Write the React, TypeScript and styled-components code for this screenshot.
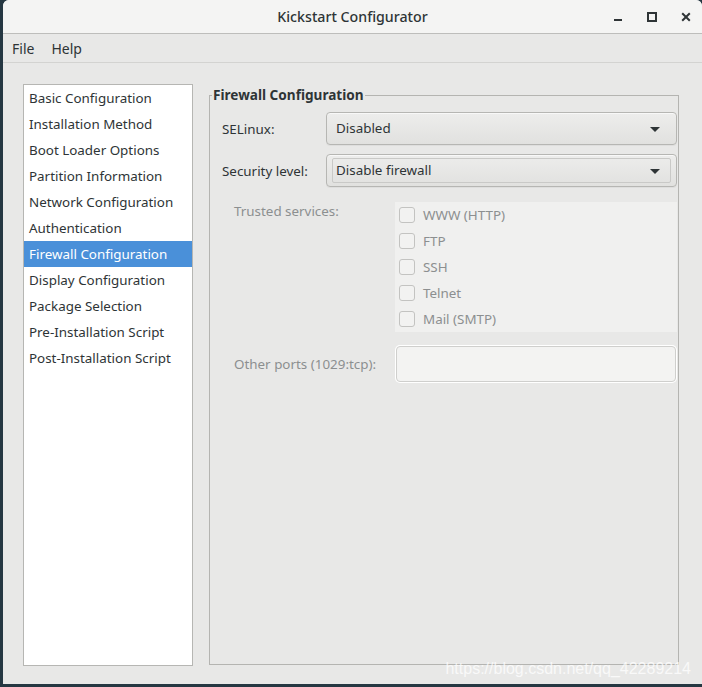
import React from "react";
import styled, { createGlobalStyle } from "styled-components";

const Global = createGlobalStyle`
  html, body { margin: 0; padding: 0; }
  body { background: #243541; font-family: "Noto Sans", "DejaVu Sans", sans-serif; }
  * { box-sizing: border-box; }
`;

const Desktop = styled.div`
  width: 702px;
  height: 687px;
  background: #253742;
  padding: 0 0 3px 3px;
  position: relative;
  overflow: hidden;
`;

const Window = styled.div`
  width: 699px;
  height: 684px;
  background: #e8e8e7;
  border-top-left-radius: 6px;
  border-top-right-radius: 6px;
  display: flex;
  flex-direction: column;
  overflow: hidden;
  color: #2e3436;
  font-size: 13.4px;
`;

const TitleBar = styled.div`
  height: 34px;
  flex: none;
  background: #f4f4f3;
  border-bottom: 1px solid #bdbdbb;
  display: flex;
  align-items: center;
  position: relative;
`;

const Title = styled.div`
  position: absolute;
  left: 0;
  right: 0;
  text-align: center;
  font-size: 14.2px;
  font-weight: 500;
  color: #2e3436;
  top: 7px;
`;

const Controls = styled.div`
  margin-left: auto;
  display: flex;
  align-items: center;
  margin-right: -1px;
  position: relative;
`;

const CtrlBtn = styled.div`
  width: 34px;
  height: 34px;
  display: flex;
  align-items: center;
  justify-content: center;
`;

const MenuBar = styled.div`
  height: 29px;
  flex: none;
  display: flex;
  align-items: center;
  padding-left: 8px;
  border-bottom: 1px solid #d3d3d1;
`;

const MenuItem = styled.div`
  padding: 0 6px 0 1px;
  margin-right: 10px;
  font-size: 14px;
`;

const Body = styled.div`
  flex: 1;
  display: flex;
  padding: 21px 23px 18px 20px;
  gap: 16px;
`;

const List = styled.div`
  width: 170px;
  background: #ffffff;
  border: 1px solid #b6b6b3;
  display: flex;
  flex-direction: column;
`;

const ListItem = styled.div<{ $selected?: boolean }>`
  height: 26px;
  line-height: 26px;
  padding-left: 5px;
  font-size: 13.4px;
  white-space: nowrap;
  background: ${(p) => (p.$selected ? "#4a90d9" : "transparent")};
  color: ${(p) => (p.$selected ? "#ffffff" : "#2e3436")};
`;

const Frame = styled.fieldset`
  flex: 1;
  margin: 2px 0 1px 0;
  padding: 0;
  border: 1px solid #b4b4b1;
  min-width: 0;
`;

const Legend = styled.legend`
  padding: 0 1px;
  margin-left: 2px;
  font-weight: 700;
  font-size: 13.6px;
  line-height: 18px;
`;

const FrameInner = styled.div`
  padding: 8px 1px 0 12px;
  display: flex;
  flex-direction: column;
`;

const TopGrid = styled.div`
  display: grid;
  grid-template-columns: 104px 1fr;
  row-gap: 9px;
  align-items: center;
`;

const Label = styled.div<{ $disabled?: boolean }>`
  font-size: 13.4px;
  color: ${(p) => (p.$disabled ? "#8c8f90" : "#2e3436")};
  white-space: nowrap;
`;

const Combo = styled.div`
  height: 33px;
  border: 1px solid #b6b6b3;
  border-radius: 4px;
  background: linear-gradient(#ededec, #e1e1df);
  box-shadow: inset 0 1px #f8f8f8, 0 1px rgba(0, 0, 0, 0.04);
  display: flex;
  align-items: stretch;
  padding: 3px 5px;
`;

const ComboInner = styled.div<{ $focus?: boolean }>`
  flex: 1;
  display: flex;
  align-items: center;
  padding: 0 10px 1px 3px;
  border: 1px solid ${(p) => (p.$focus ? "#c9c9c7" : "transparent")};
  border-radius: 2px;
  font-size: 13.4px;
`;

const ComboText = styled.span`
  flex: 1;
`;

const Arrow = styled.span`
  width: 0;
  height: 0;
  border-left: 5px solid transparent;
  border-right: 5px solid transparent;
  border-top: 5px solid #2e3436;
  margin-top: 2px;
`;

const LowerGrid = styled.div`
  display: grid;
  grid-template-columns: 161px 1fr;
  margin-top: 15px;
  padding-left: 12px;
  row-gap: 14px;
`;

const TrustedLabel = styled(Label)`
  padding-top: 0;
`;

const CheckArea = styled.div`
  background: #f0f0ef;
  display: flex;
  flex-direction: column;
  padding: 0 0 0 4px;
`;

const CheckRow = styled.div`
  height: 26px;
  display: flex;
  align-items: center;
  gap: 8px;
  color: #8c8f90;
  font-size: 13.4px;
`;

const CheckBox = styled.span`
  width: 16px;
  height: 16px;
  border: 1px solid #c3c3c1;
  border-radius: 3px;
  background: #f2f2f1;
  flex: none;
`;

const PortsLabel = styled(Label)`
  align-self: center;
  margin-top: -1px;
`;

const Entry = styled.div`
  height: 36px;
  border: 1px solid #cfcfcd;
  border-radius: 4px;
  background: #f3f3f2;
  box-shadow: 0 0 0 1px #ffffff;
  margin: 0 1px;
`;

const Watermark = styled.div`
  position: absolute;
  right: 11px;
  bottom: 9px;
  font-family: "Liberation Sans", Arial, sans-serif;
  font-size: 16px;
  color: rgba(255, 255, 255, 0.75);
  pointer-events: none;
`;

const items = [
  "Basic Configuration",
  "Installation Method",
  "Boot Loader Options",
  "Partition Information",
  "Network Configuration",
  "Authentication",
  "Firewall Configuration",
  "Display Configuration",
  "Package Selection",
  "Pre-Installation Script",
  "Post-Installation Script",
];

const services = ["WWW (HTTP)", "FTP", "SSH", "Telnet", "Mail (SMTP)"];

export default function App() {
  return (
    <>
      <Global />
      <Desktop>
        <Window>
          <TitleBar>
            <Title>Kickstart Configurator</Title>
            <Controls>
              <CtrlBtn>
                <svg width="10" height="10" viewBox="0 0 10 10">
                  <rect x="1" y="7" width="8" height="2" fill="#2e3436" />
                </svg>
              </CtrlBtn>
              <CtrlBtn>
                <svg width="10" height="10" viewBox="0 0 10 10">
                  <rect x="1" y="1" width="8" height="8" fill="none" stroke="#2e3436" strokeWidth="2" />
                </svg>
              </CtrlBtn>
              <CtrlBtn>
                <svg width="10" height="10" viewBox="0 0 10 10">
                  <path d="M1.2 1.2 L8.8 8.8 M8.8 1.2 L1.2 8.8" stroke="#2e3436" strokeWidth="2" />
                </svg>
              </CtrlBtn>
            </Controls>
          </TitleBar>
          <MenuBar>
            <MenuItem>File</MenuItem>
            <MenuItem>Help</MenuItem>
          </MenuBar>
          <Body>
            <List>
              {items.map((it) => (
                <ListItem key={it} $selected={it === "Firewall Configuration"}>
                  {it}
                </ListItem>
              ))}
            </List>
            <Frame>
              <Legend>Firewall Configuration</Legend>
              <FrameInner>
                <TopGrid>
                  <Label>SELinux:</Label>
                  <Combo>
                    <ComboInner>
                      <ComboText>Disabled</ComboText>
                      <Arrow />
                    </ComboInner>
                  </Combo>
                  <Label>Security level:</Label>
                  <Combo>
                    <ComboInner $focus>
                      <ComboText>Disable firewall</ComboText>
                      <Arrow />
                    </ComboInner>
                  </Combo>
                </TopGrid>
                <LowerGrid>
                  <TrustedLabel $disabled>Trusted services:</TrustedLabel>
                  <CheckArea>
                    {services.map((s) => (
                      <CheckRow key={s}>
                        <CheckBox />
                        {s}
                      </CheckRow>
                    ))}
                  </CheckArea>
                  <PortsLabel $disabled>Other ports (1029:tcp):</PortsLabel>
                  <Entry />
                </LowerGrid>
              </FrameInner>
            </Frame>
          </Body>
        </Window>
        <Watermark>https://blog.csdn.net/qq_42289214</Watermark>
      </Desktop>
    </>
  );
}
